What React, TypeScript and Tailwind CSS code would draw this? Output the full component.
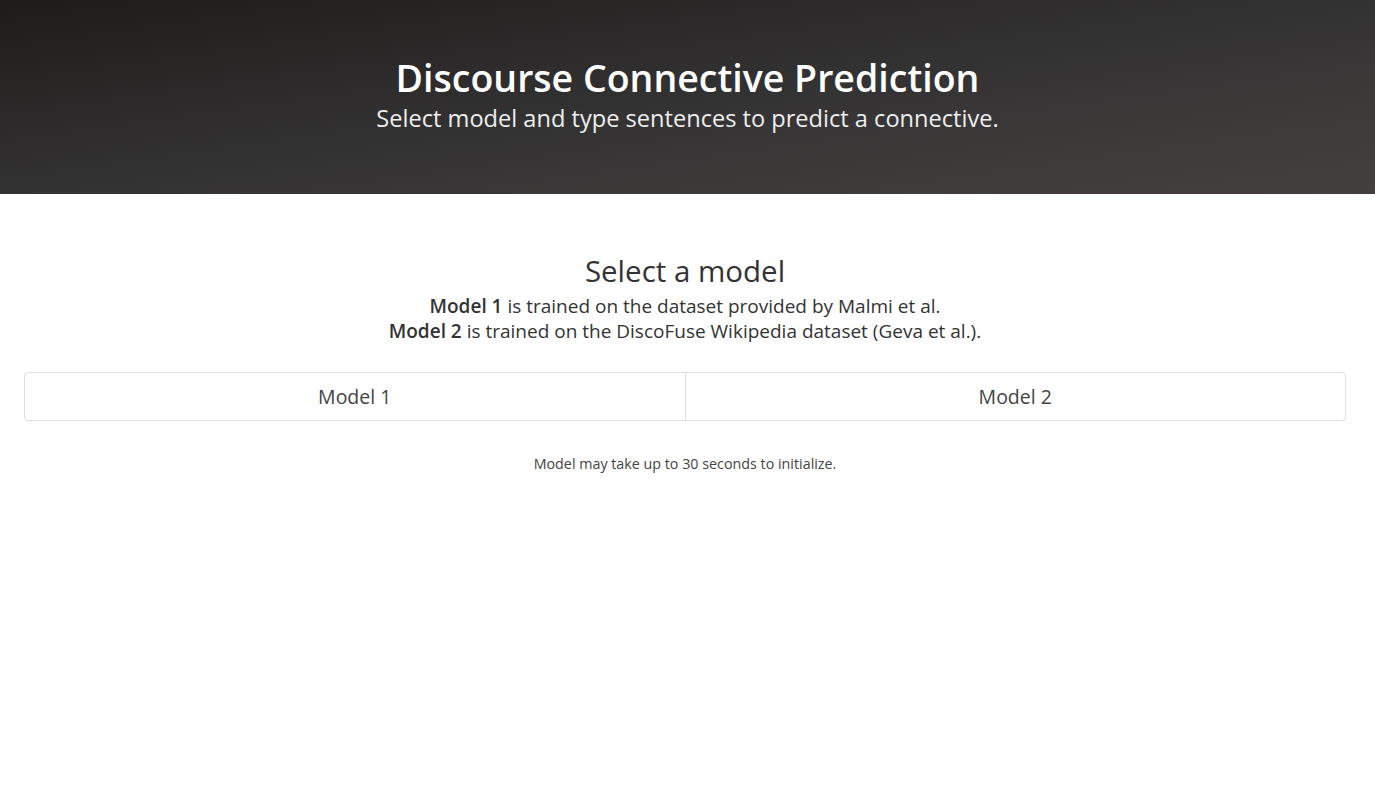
export default function App() {
  return (
    <div className="min-h-screen bg-white font-['Open_Sans',sans-serif] text-[#333]">
      <header className="h-[194px] bg-gradient-to-br from-[#1f1b1b] via-[#333232] to-[#454040] flex flex-col items-center justify-center pb-[6px]">
        <h1 className="text-[37.5px] font-semibold leading-[46px] text-white">Discourse Connective Prediction</h1>
        <p className="text-[23.6px] leading-[32px] text-[#eee] mt-[1px]">Select model and type sentences to predict a connective.</p>
      </header>

      <main className="pl-[24px] pr-[29px] pt-[57px]">
        <div className="text-center">
          <h2 className="text-[29.5px] font-medium leading-[40px]">Select a model</h2>
          <p className="text-[19px] leading-[25px] mt-[3px]">
            <span className="font-semibold">Model 1</span> is trained on the dataset provided by Malmi et al.
          </p>
          <p className="text-[19px] leading-[25px]">
            <span className="font-semibold">Model 2</span> is trained on the DiscoFuse Wikipedia dataset (Geva et al.).
          </p>
        </div>

        <div className="mt-[28px] flex h-[49px] rounded-[4px] border border-[#ddd]">
          <button className="flex-1 text-[19.5px] text-[#444]">Model 1</button>
          <button className="flex-1 border-l border-[#ddd] text-[19.5px] text-[#444]">Model 2</button>
        </div>

        <p className="mt-[32px] text-center text-[14.3px] text-[#444]">Model may take up to 30 seconds to initialize.</p>
      </main>
    </div>
  );
}
